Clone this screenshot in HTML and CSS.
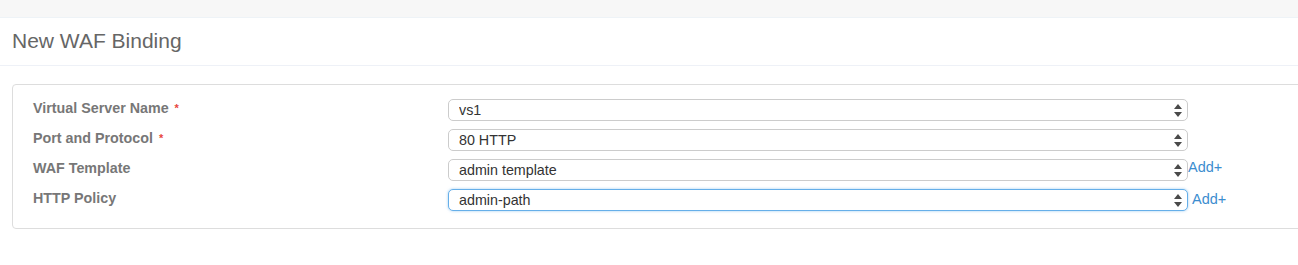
FILE: index.html
```html
<!DOCTYPE html>
<html lang="en">
	<head>
		<meta charset="utf-8">
		<title>New WAF Binding</title>
		<link rel="stylesheet" href="styles.css">
	</head>
	<body>
		<div class="topbar"></div>
		<div class="page-head">
			<h1>New WAF Binding</h1>
		</div>
		<form class="panel">
			<div class="row">
				<label>Virtual Server Name <span class="req">*</span></label>
				<div class="field">
					<div class="sel">
						<select><option>vs1</option></select>
						<svg class="arrows" width="8" height="13" viewBox="0 0 8 13"><path d="M4 0L8 5H0z M4 13L0 8H8z" fill="#4a4a4a"/></svg>
					</div>
				</div>
			</div>
			<div class="row">
				<label>Port and Protocol <span class="req">*</span></label>
				<div class="field">
					<div class="sel">
						<select><option>80 HTTP</option></select>
						<svg class="arrows" width="8" height="13" viewBox="0 0 8 13"><path d="M4 0L8 5H0z M4 13L0 8H8z" fill="#4a4a4a"/></svg>
					</div>
				</div>
			</div>
			<div class="row">
				<label>WAF Template</label>
				<div class="field">
					<div class="sel">
						<select><option>admin template</option></select>
						<svg class="arrows" width="8" height="13" viewBox="0 0 8 13"><path d="M4 0L8 5H0z M4 13L0 8H8z" fill="#4a4a4a"/></svg>
					</div>
					<a class="add add-tight" href="#">Add+</a>
				</div>
			</div>
			<div class="row">
				<label>HTTP Policy</label>
				<div class="field">
					<div class="sel">
						<select class="focus"><option>admin-path</option></select>
						<svg class="arrows" width="8" height="13" viewBox="0 0 8 13"><path d="M4 0L8 5H0z M4 13L0 8H8z" fill="#4a4a4a"/></svg>
					</div>
					<a class="add" href="#">Add+</a>
				</div>
			</div>
		</form>
	</body>
</html>
```

FILE: styles.css
```css
html,body{ margin: 0; padding: 0; overflow: hidden; background: #fff; }
body{ font-family: "Liberation Sans", Arial, Helvetica, sans-serif; font-size: 14px; color: #333; }
.topbar{ height: 17px; background: #f7f7f7; border-bottom: 1px solid #eef3f7; }
.page-head{ height: 47px; border-bottom: 1px solid #eef1f7; }
.page-head h1{ margin: 0; padding: 11px 0 0 12px; font-size: 21px; font-weight: normal; line-height: 24px; color: #666; }
.panel{ margin: 18px -20px 0 12px; padding: 14px 0 17px 20px; border: 1px solid #ddd; border-radius: 4px; }
.row{ display: flex; align-items: flex-start; height: 22px; margin-bottom: 8px; }
.row:last-child{ margin-bottom: 0; }
.row label{ width: 415px; font-weight: bold; font-size: 14.3px; color: #777; line-height: 18px; margin-top: 0; }
.req{ color: #e8453c; font-size: 11px; vertical-align: top; margin-left: 2px; }
.field{ display: flex; align-items: flex-start; }
.sel{ position: relative; width: 740px; }
.sel select{ -webkit-appearance: none; appearance: none; display: block; width: 100%; height: 22px; margin: 0; padding: 0 20px 0 10px; border: 1px solid #ccc; border-radius: 5px; background: #fff; font: 14.3px "Liberation Sans", Arial, sans-serif; color: #333; outline: none; }
.sel select.focus{ border-color: #66afe9; box-shadow: 0 0 3px rgba(102,175,233,.6); }
.arrows{ position: absolute; right: 6px; top: 5px; }
.add{ color: #3c8dcf; text-decoration: none; font-size: 14.5px; line-height: 18px; margin-left: 4px; margin-top: 1px; }
.add-tight{ margin-left: 0; margin-top: -1px; }
```
